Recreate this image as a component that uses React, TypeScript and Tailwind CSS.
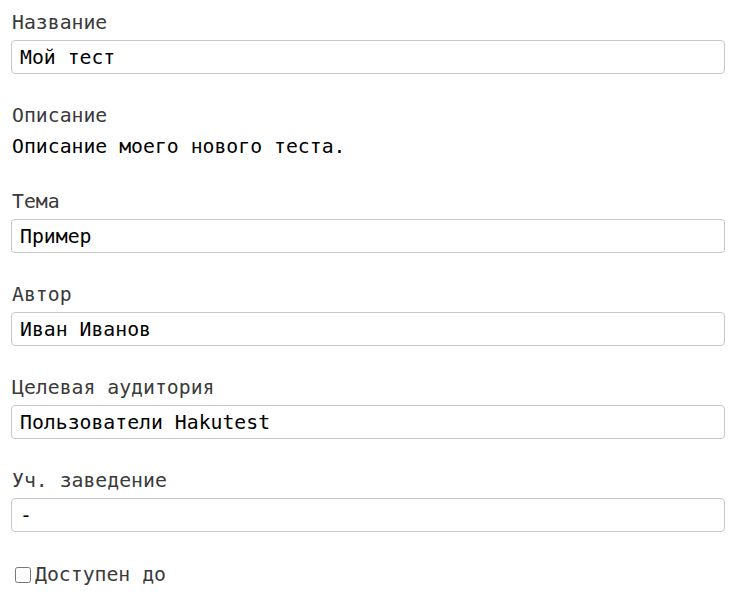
import React from 'react';

const fields = [
  { label: 'Название', value: 'Мой тест' },
  { label: 'Описание', value: 'Описание моего нового теста.', plain: true },
  { label: 'Тема', value: 'Пример' },
  { label: 'Автор', value: 'Иван Иванов' },
  { label: 'Целевая аудитория', value: 'Пользователи Hakutest' },
  { label: 'Уч. заведение', value: '-' },
];

export default function App() {
  return (
    <div className="min-h-screen bg-white pl-[11px] pr-[14px] pt-[12px] font-['DejaVu_Sans_Mono',monospace]">
      {fields.map((f) => (
        <div key={f.label} className={f.plain ? 'mb-[33px]' : 'mb-[31px]'}>
          <div className="h-[22px] text-[19.8px] leading-[22px] text-[#3a3a3a] pl-[1px]">{f.label}</div>
          {f.plain ? (
            <div className="mt-[9px] h-[22px] text-[19.8px] leading-[22px] text-black pl-[1px]">{f.value}</div>
          ) : (
            <input
              readOnly
              value={f.value}
              className="mt-[6px] block h-[34px] w-full rounded-[4px] border border-[#c8c8c8] px-[8px] text-[19.8px] text-black outline-none"
            />
          )}
        </div>
      ))}
      <label className="mt-[1px] flex items-center h-[24px] text-[19.8px] leading-[24px] text-[#3a3a3a]">
        <input type="checkbox" className="ml-[4px] mr-[4px] h-[16px] w-[16px] rounded-[3px] border border-[#999]" />
        Доступен до
      </label>
    </div>
  );
}
